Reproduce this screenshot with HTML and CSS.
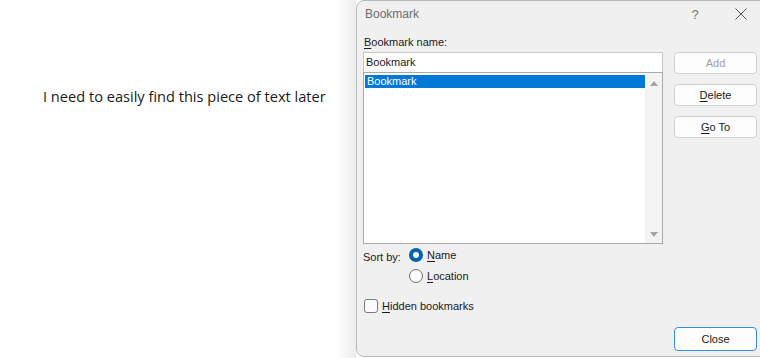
FILE: index.html
```html
<!DOCTYPE html>
<html lang="en">
<head>
    <meta charset="UTF-8">
    <title>Bookmark</title>
    <link rel="stylesheet" href="styles.css">
</head>
<body>
    <div class="page">
        <div class="doc">
            <p class="doc-text">I need to easily find this piece of text later</p>
        </div>

        <!-- Bookmark dialog -->
        <div class="dialog">
            <div class="title-bar">
                <span class="title">Bookmark</span>
                <span class="title-help">?</span>
                <span class="title-close">
                    <svg width="12" height="12" viewBox="0 0 12 12"><path d="M0.5 0.5 L11.5 11.5 M11.5 0.5 L0.5 11.5" stroke="#555" stroke-width="1"/></svg>
                </span>
            </div>

            <div class="dialog-body">
                <div class="main-row">
                    <div class="left-col">
                        <label class="field-label"><u>B</u>ookmark name:</label>
                        <div class="name-input">Bookmark</div>
                        <div class="list-box">
                            <div class="list-items">
                                <div class="list-item selected">Bookmark</div>
                            </div>
                            <div class="scrollbar">
                                <span class="arrow up"></span>
                                <span class="arrow down"></span>
                            </div>
                        </div>
                    </div>
                    <div class="right-col">
                        <button class="dlg-button disabled">Add</button>
                        <button class="dlg-button"><u>D</u>elete</button>
                        <button class="dlg-button"><u>G</u>o To</button>
                    </div>
                </div>

                <div class="sort-row">
                    <span class="sort-label">Sort by:</span>
                    <div class="radio-group">
                        <div class="radio-line"><span class="radio checked"></span><u>N</u>ame</div>
                        <div class="radio-line"><span class="radio"></span><u>L</u>ocation</div>
                    </div>
                </div>

                <div class="check-line"><span class="checkbox"></span><u>H</u>idden bookmarks</div>

                <div class="bottom-row">
                    <button class="dlg-button default">Close</button>
                </div>
            </div>
        </div>
    </div>
</body>
</html>
```

FILE: styles.css
```css
* {
    margin: 0;
    padding: 0;
    box-sizing: border-box;
}

body {
    width: 760px;
    height: 358px;
    overflow: hidden;
    background: #fff;
    font-family: "Liberation Sans", Arial, sans-serif;
}

.page {
    display: flex;
    height: 358px;
}

/* Document area */
.doc {
    width: 356px;
    flex-shrink: 0;
    padding: 86px 0 0 43px;
    background: linear-gradient(90deg, #fff 0, #fff 336px, #ececec 356px);
}

.doc-text {
    font-family: "Open Sans", sans-serif;
    font-size: 14.6px;
    color: #1a1a1a;
}

/* Dialog */
.dialog {
    width: 420px;
    height: 357px;
    flex-shrink: 0;
    background: #f0f0f0;
    border: 1px solid #b9b9b9;
    border-radius: 8px;
    font-size: 11px;
    color: #1a1a1a;
    display: flex;
    flex-direction: column;
}

.title-bar {
    display: flex;
    align-items: center;
    height: 26px;
    padding-left: 8px;
}

.title {
    font-size: 12px;
    color: #6d6d6d;
    flex-grow: 1;
}

.title-help {
    font-size: 13px;
    color: #777;
    width: 46px;
    padding-right: 12px;
    text-align: center;
}

.title-close {
    width: 50px;
    display: flex;
    justify-content: flex-start;
    padding-left: 11px;
    margin-right: 1px;
}

.dialog-body {
    display: flex;
    flex-direction: column;
    flex-grow: 1;
    padding: 8px 0 0 6px;
}

.main-row {
    display: flex;
    gap: 11px;
}

.left-col {
    width: 300px;
    display: flex;
    flex-direction: column;
}

.field-label {
    line-height: 14px;
    height: 17px;
    padding-left: 1px;
}

.name-input {
    height: 20px;
    background: #fff;
    border: 1px solid #c6c6c6;
    border-bottom: none;
    padding: 2px 2px;
    line-height: 15px;
}

.list-box {
    height: 172px;
    display: flex;
    background: #fff;
    border: 1px solid #a9a9a9;
}

.list-items {
    flex-grow: 1;
    padding: 2px 0 0 1px;
}

.list-item {
    height: 13px;
    line-height: 13px;
    padding-left: 2px;
}

.list-item.selected {
    background: #0078d7;
    color: #fff;
}

.scrollbar {
    width: 17px;
    background: #f3f3f3;
    display: flex;
    flex-direction: column;
    justify-content: space-between;
    align-items: center;
    padding: 8px 0 6px;
}

.arrow {
    width: 0;
    height: 0;
    border-left: 4px solid transparent;
    border-right: 4px solid transparent;
}

.arrow.up {
    border-bottom: 5px solid #a3a3a3;
}

.arrow.down {
    border-top: 5px solid #a3a3a3;
}

.right-col {
    width: 83px;
    display: flex;
    flex-direction: column;
    gap: 10px;
    padding-top: 17px;
}

.dlg-button {
    height: 22px;
    width: 83px;
    background: #fdfdfd;
    border: 1px solid #d0d0d0;
    border-radius: 4px;
    font-family: inherit;
    font-size: 11px;
    color: #1a1a1a;
}

.dlg-button.disabled {
    color: #a0a0a0;
}

.dlg-button.default {
    height: 24px;
    border: 1px solid #3c8ce0;
}

/* Sort options */
.sort-row {
    display: flex;
    margin-top: 3px;
}

.sort-label {
    width: 46px;
    line-height: 16px;
    padding-top: 2px;
}

.radio-group {
    display: flex;
    flex-direction: column;
    gap: 5px;
}

.radio-line,
.check-line {
    display: flex;
    align-items: center;
    height: 16px;
    line-height: 16px;
}

.radio {
    width: 14px;
    height: 14px;
    border-radius: 50%;
    border: 1px solid #6f6f6f;
    background: #fbfbfb;
    margin-right: 4px;
}

.radio.checked {
    border: 4px solid #0063b1;
    background: #fff;
}

.check-line {
    margin-top: 14px;
    padding-left: 1px;
}

.checkbox {
    width: 14px;
    height: 14px;
    border: 1px solid #7a7a7a;
    border-radius: 3px;
    background: #fbfbfb;
    margin-right: 4px;
}

.bottom-row {
    display: flex;
    padding-left: 311px;
    margin-top: 13px;
}

u {
    text-decoration: underline;
    text-underline-offset: 2px;
}
```
